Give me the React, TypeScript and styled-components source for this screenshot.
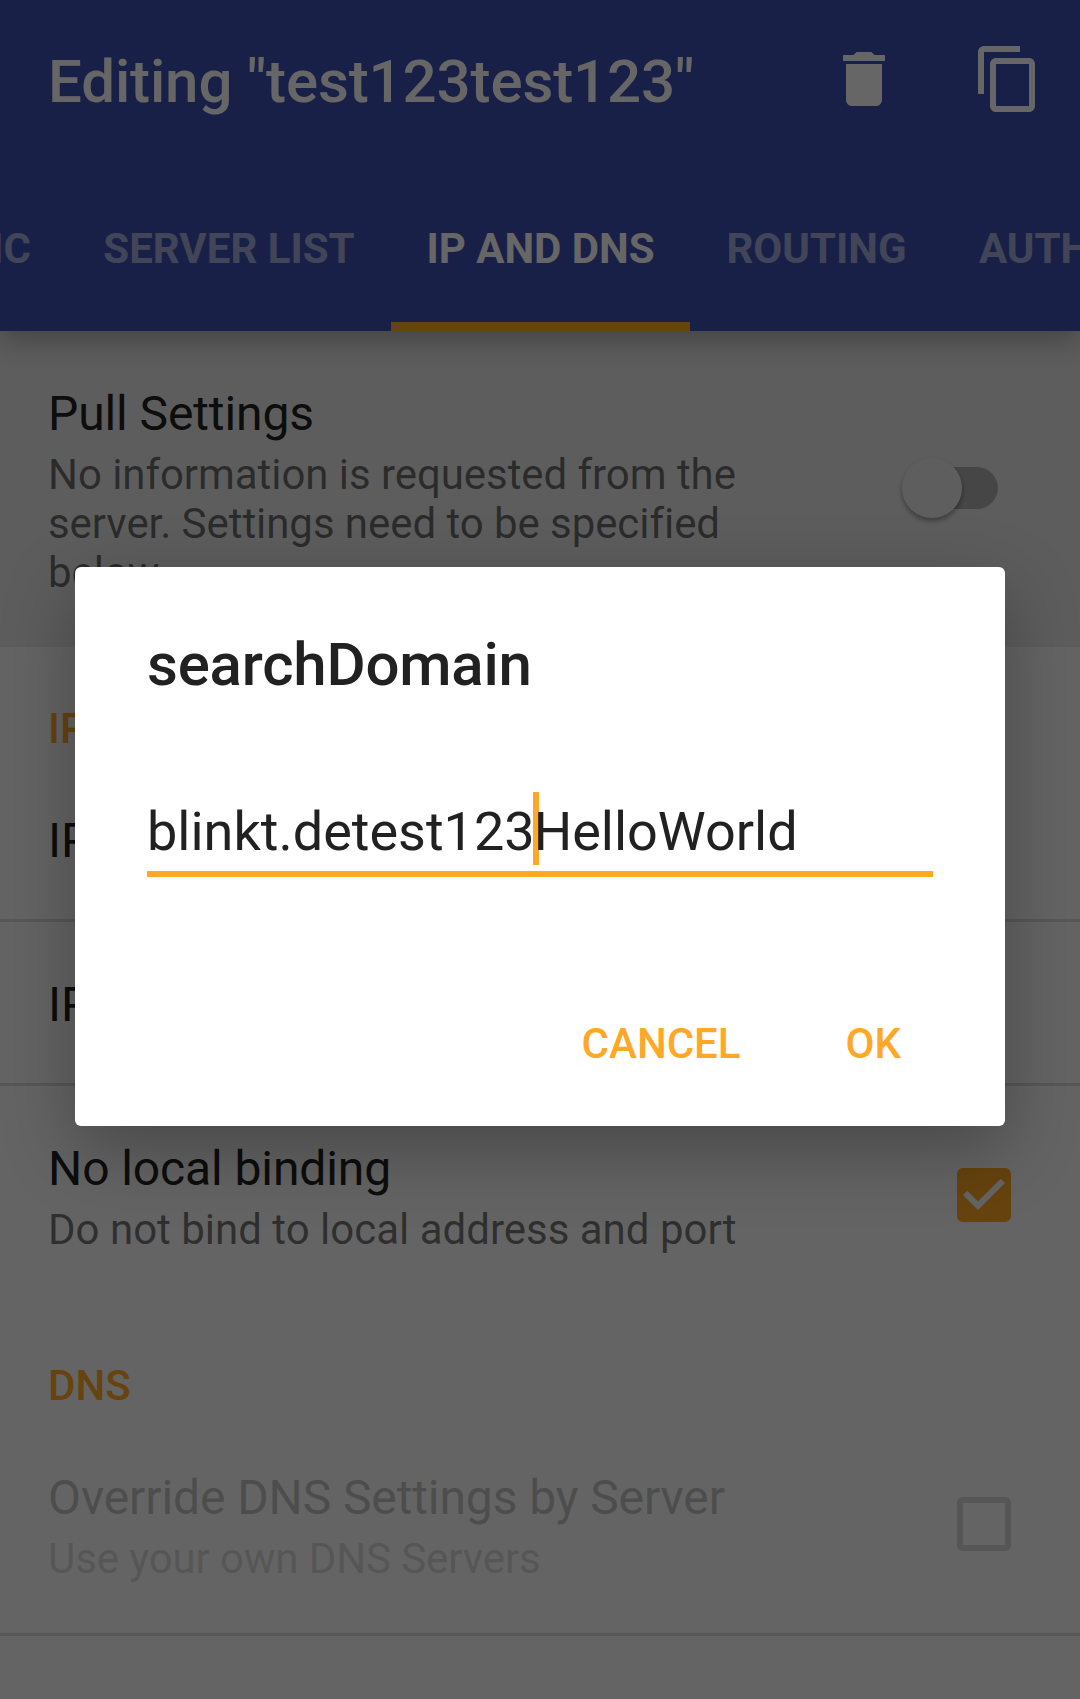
import React from "react";
import styled, { createGlobalStyle } from "styled-components";

const ACCENT = "#ffa726";

const GlobalStyle = createGlobalStyle`
  *, *::before, *::after { box-sizing: border-box; }
  html, body { margin: 0; padding: 0; }
  body { font-family: Roboto, "Noto Sans", sans-serif; }
`;

const Screen = styled.div`
  position: relative;
  width: 1080px;
  height: 1699px;
  overflow: hidden;
  display: flex;
  flex-direction: column;
  background: #fafafa;
  color: #212121;
`;

const Header = styled.header`
  position: relative;
  z-index: 1;
  flex: none;
  display: flex;
  flex-direction: column;
  height: 331px;
  background: #3f51b5;
  color: #fff;
  box-shadow: 0 10px 28px rgba(0, 0, 0, 0.28);
`;

const Toolbar = styled.div`
  display: flex;
  align-items: center;
  height: 163px;
  padding: 0 36px 5px 48px;
`;

const Title = styled.h1`
  flex: 1;
  margin: 0;
  padding-top: 6px;
  font-size: 60px;
  font-weight: 500;
  line-height: 70px;
  letter-spacing: -0.12px;
  white-space: nowrap;
`;

const Actions = styled.div`
  display: flex;
  gap: 72px;
`;

const Icon = styled.svg`
  display: block;
  width: 72px;
  height: 72px;
  fill: currentColor;
`;

const Tabs = styled.nav`
  display: flex;
  height: 168px;
  overflow: hidden;
`;

const Tab = styled.div<{ $active?: boolean; $width: number; $align?: string }>`
  flex: none;
  display: flex;
  align-items: center;
  justify-content: ${(p) => p.$align ?? "center"};
  width: ${(p) => p.$width}px;
  padding: 11px 36px 0 ${(p) => (p.$align === "flex-end" ? 0 : 36)}px;
  border-bottom: 9px solid ${(p) => (p.$active ? ACCENT : "transparent")};
  color: ${(p) => (p.$active ? "#fff" : "rgba(255, 255, 255, 0.54)")};
  font-size: 42px;
  font-weight: 700;
  line-height: 49px;
  white-space: nowrap;
`;

const Row = styled.section<{ $shaded?: boolean; $end?: number; $divided?: boolean }>`
  flex: none;
  display: flex;
  align-items: center;
  justify-content: space-between;
  padding: 0 ${(p) => p.$end ?? 60}px 0 48px;
  background: ${(p) => (p.$shaded ? "#e9e9e9" : "transparent")};
  border-bottom: ${(p) => (p.$divided ? "3px solid rgba(0, 0, 0, 0.13)" : "none")};
`;

const RowText = styled.div<{ $disabled?: boolean }>`
  width: 750px;
  padding: 55px 0 50px;
  opacity: ${(p) => (p.$disabled ? 0.26 : 1)};
`;

const RowTitle = styled.div`
  font-size: 48px;
  line-height: 56px;
  letter-spacing: -0.1px;
`;

const RowSummary = styled.div<{ $tracking?: number }>`
  margin-top: 8px;
  color: rgba(0, 0, 0, 0.54);
  font-size: 42px;
  line-height: 49px;
  letter-spacing: ${(p) => p.$tracking ?? 0}px;
`;

const Category = styled.h2`
  flex: none;
  display: flex;
  align-items: flex-end;
  height: 111px;
  margin: 0;
  padding: 0 48px 5px;
  color: ${ACCENT};
  font-size: 42px;
  font-weight: 500;
  line-height: 49px;
`;

const Switch = styled.div`
  display: flex;
  align-items: center;
  width: 96px;
  height: 60px;
  margin-bottom: 2px;
`;

const SwitchThumb = styled.div`
  flex: none;
  width: 60px;
  height: 60px;
  margin-left: -12px;
  border-radius: 50%;
  background: #ececec;
  box-shadow: 0 3px 5px rgba(0, 0, 0, 0.35);
`;

const SwitchTrack = styled.div`
  flex: none;
  width: 84px;
  height: 42px;
  margin: 0 -84px 0 12px;
  border-radius: 21px;
  background: #afafaf;
`;

const CheckIcon = styled(Icon)<{ $checked?: boolean }>`
  color: ${(p) => (p.$checked ? ACCENT : "rgba(0, 0, 0, 0.14)")};
`;

const Scrim = styled.div`
  position: absolute;
  inset: 0;
  z-index: 2;
  padding: 567px 75px 0;
  background: rgba(0, 0, 0, 0.6);
`;

const Dialog = styled.div`
  display: flex;
  flex-direction: column;
  height: 559px;
  padding: 63px 72px 0;
  border-radius: 6px;
  background: #fff;
  box-shadow: 0 24px 72px rgba(0, 0, 0, 0.29);
`;

const DialogTitle = styled.h2`
  margin: 0;
  font-size: 60px;
  font-weight: 500;
  line-height: 70px;
  letter-spacing: -0.2px;
`;

const Field = styled.div`
  display: flex;
  align-items: flex-start;
  height: 85px;
  margin-top: 92px;
  border-bottom: 6px solid ${ACCENT};
  font-size: 54px;
  line-height: 79px;
  white-space: nowrap;
`;

const Caret = styled.span`
  flex: none;
  width: 6px;
  height: 73px;
  margin: 0 -5px 0 -2px;
  background: ${ACCENT};
`;

const DialogActions = styled.div`
  display: flex;
  justify-content: flex-end;
  gap: 105px;
  margin-top: 142px;
  padding-right: 32px;
`;

const DialogButton = styled.button`
  padding: 0;
  border: 0;
  background: none;
  color: ${ACCENT};
  font: 500 42px/49px Roboto, sans-serif;
`;

export default function App() {
  return (
    <>
      <GlobalStyle />
      <Screen>
        <Header>
          <Toolbar>
            <Title>Editing "test123test123"</Title>
            <Actions>
              <Icon viewBox="0 0 24 24">
                <path d="M6 19c0 1.1.9 2 2 2h8c1.1 0 2-.9 2-2V7H6v12zM19 4h-3.5l-1-1h-5l-1 1H5v2h14V4z" />
              </Icon>
              <Icon viewBox="0 0 24 24">
                <path d="M16 1H4c-1.1 0-2 .9-2 2v14h2V3h12V1zm3 4H8c-1.1 0-2 .9-2 2v14c0 1.1.9 2 2 2h11c1.1 0 2-.9 2-2V7c0-1.1-.9-2-2-2zm0 16H8V7h11v14z" />
              </Icon>
            </Actions>
          </Toolbar>
          <Tabs>
            <Tab $width={67} $align="flex-end">BASIC</Tab>
            <Tab $width={324}>SERVER LIST</Tab>
            <Tab $width={299} $active>IP AND DNS</Tab>
            <Tab $width={253}>ROUTING</Tab>
            <Tab $width={700} $align="flex-start">AUTHENTICATION</Tab>
          </Tabs>
        </Header>

        <Row $shaded $end={82}>
          <RowText>
            <RowTitle>Pull Settings</RowTitle>
            <RowSummary $tracking={-0.06}>
              No information is requested from the server. Settings need to be specified below.
            </RowSummary>
          </RowText>
          <Switch>
            <SwitchTrack />
            <SwitchThumb />
          </Switch>
        </Row>

        <Category>IP</Category>
        <Row $divided>
          <RowText>
            <RowTitle>IPv4 Address</RowTitle>
          </RowText>
        </Row>
        <Row $divided>
          <RowText>
            <RowTitle>IPv6 Address</RowTitle>
          </RowText>
        </Row>
        <Row>
          <RowText>
            <RowTitle>No local binding</RowTitle>
            <RowSummary>Do not bind to local address and port</RowSummary>
          </RowText>
          <CheckIcon viewBox="0 0 24 24" $checked>
            <path d="M19 3H5c-1.11 0-2 .9-2 2v14c0 1.1.89 2 2 2h14c1.11 0 2-.9 2-2V5c0-1.1-.89-2-2-2zm-9 14l-5-5 1.41-1.41L10 14.17l7.59-7.59L19 8l-9 9z" />
          </CheckIcon>
        </Row>

        <Category>DNS</Category>
        <Row $divided>
          <RowText $disabled>
            <RowTitle>Override DNS Settings by Server</RowTitle>
            <RowSummary $tracking={-0.1}>Use your own DNS Servers</RowSummary>
          </RowText>
          <CheckIcon viewBox="0 0 24 24">
            <path d="M19 5v14H5V5h14m0-2H5c-1.1 0-2 .9-2 2v14c0 1.1.9 2 2 2h14c1.1 0 2-.9 2-2V5c0-1.1-.9-2-2-2z" />
          </CheckIcon>
        </Row>

        <Scrim>
          <Dialog role="dialog">
            <DialogTitle>searchDomain</DialogTitle>
            <Field>
              <span>blinkt.detest123</span>
              <Caret />
              <span>HelloWorld</span>
            </Field>
            <DialogActions>
              <DialogButton>CANCEL</DialogButton>
              <DialogButton>OK</DialogButton>
            </DialogActions>
          </Dialog>
        </Scrim>
      </Screen>
    </>
  );
}
